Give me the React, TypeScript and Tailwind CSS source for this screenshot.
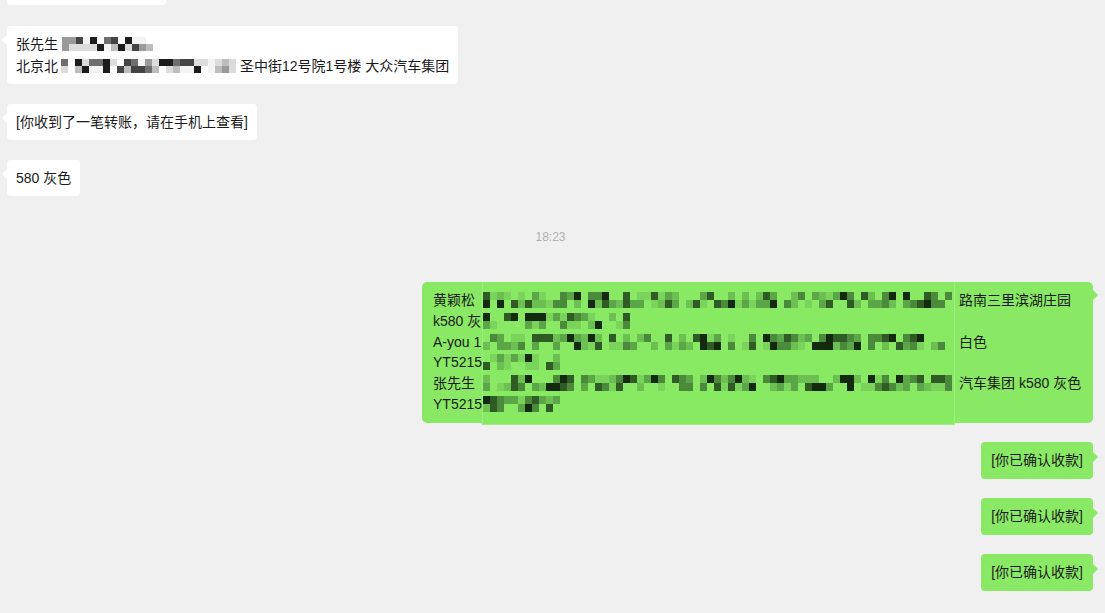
import React from 'react';

const GREEN_SHADES = ['#89e965', '#89e965', '#7ad45c', '#6cc051', '#5ba646', '#4a8a3a', '#2f5c24', '#142a0e'];
const GRAY_SHADES = ['#ffffff', '#f3f3f3', '#dcdcdc', '#bdbdbd', '#9a9a9a', '#6e6e6e', '#444444', '#1c1c1c'];

// deterministic noise so the mosaic looks the same every render
const noise = (n: number) => {
  const x = Math.sin(n * 12.9898 + 78.233) * 43758.5453;
  return x - Math.floor(x);
};

interface MosaicProps {
  cols: number;
  rows?: number;
  seed: number;
  shades: string[];
  cell?: number;
  cellH?: number;
}

const Mosaic: React.FC<MosaicProps> = ({ cols, rows = 2, seed, shades, cell = 7, cellH }) => (
  <span className="inline-flex flex-col align-middle">
    {Array.from({ length: rows }, (_, r) => (
      <span key={r} className="flex">
        {Array.from({ length: cols }, (_, c) => {
          const v = noise(seed * 1000 + r * 131 + c * 7);
          const idx = Math.min(shades.length - 1, Math.floor(Math.pow(v, 1.1) * shades.length));
          return <span key={c} style={{ width: cell, height: cellH ?? cell, backgroundColor: shades[idx] }} />;
        })}
      </span>
    ))}
  </span>
);

const LeftBubble: React.FC<{ children: React.ReactNode }> = ({ children }) => (
  <div className="relative self-start ml-[7px] bg-white rounded-[4px] px-[9px] py-[7px] leading-[22px]">
    <span className="absolute left-[-5px] top-[9px] w-0 h-0 border-y-[5px] border-y-transparent border-r-[5px] border-r-white" />
    {children}
  </div>
);

const RightBubble: React.FC<{ children: React.ReactNode }> = ({ children }) => (
  <div className="relative self-end mr-[12px] bg-[#89e965] rounded-[4px] px-[10px] py-[7px] leading-[23px]">
    <span className="absolute right-[-5px] top-[10px] w-0 h-0 border-y-[5px] border-y-transparent border-l-[5px] border-l-[#89e965]" />
    {children}
  </div>
);

const greenLines = [
  { left: '黄颖松 ', right: '路南三里滨湖庄园', cols: 67 },
  { left: 'k580 灰', right: '', cols: 21 },
  { left: 'A-you 1', right: '白色', cols: 66 },
  { left: 'YT5215', right: '', cols: 11 },
  { left: '张先生 ', right: '汽车集团 k580 灰色', cols: 67 },
  { left: 'YT5215', right: '', cols: 11 },
];

export default function App() {
  return (
    <div
      className="w-[1105px] h-[613px] overflow-hidden bg-[#f0f0f0] flex flex-col text-[14px] text-[#1a1a1a]"
      style={{ fontFamily: '"Liberation Sans", "Noto Sans CJK SC", sans-serif' }}
    >
      {/* tail end of a bubble scrolled off the top */}
      <div className="ml-[7px] w-[159px] h-[5px] bg-white rounded-b-[4px]" />

      <div className="mt-[21px]" />
      <LeftBubble>
        <div className="flex items-center h-[22px]">
          张先生&nbsp;
          <Mosaic cols={13} seed={3} shades={GRAY_SHADES} />
        </div>
        <div className="flex items-center h-[22px] whitespace-nowrap">
          北京北
          <span className="w-[3px]" />
          <Mosaic cols={25} seed={5} shades={GRAY_SHADES} />
          <span className="w-[4px]" />
          圣中街12号院1号楼 大众汽车集团
        </div>
      </LeftBubble>

      <div className="mt-[20px]" />
      <LeftBubble>[你收到了一笔转账，请在手机上查看]</LeftBubble>

      <div className="mt-[20px]" />
      <LeftBubble>580 灰色</LeftBubble>

      <div className="mt-[33px] self-center ml-[-4px] text-[12px] leading-[17px] text-[#b0b0b0]">18:23</div>

      {/* big forwarded order message */}
      <div className="mt-[36px] relative self-end mr-[12px] w-[671px] bg-[#89e965] rounded-[5px] pl-[11px] pr-[8px] py-[8px] leading-[20.8px]">
        <span className="absolute right-[-5px] top-[8px] w-0 h-0 border-y-[5px] border-y-transparent border-l-[5px] border-l-[#89e965]" />
        {greenLines.map((l, i) => (
          <div key={i} className="flex h-[20.8px] whitespace-nowrap">
            <span className="w-[526px] shrink-0">{l.left}</span>
            <span>{l.right}</span>
          </div>
        ))}
        <div className="absolute left-[60px] top-0 w-[473px] h-[143px] bg-[#88ea63] border-b border-x border-[#9cef7d] pt-[10px] flex flex-col gap-[4.8px]">
          {greenLines.map((l, i) => (
            <div key={i} className="h-[16px] flex">
              <Mosaic cols={l.cols} seed={20 + i} shades={GREEN_SHADES} cellH={8} />
            </div>
          ))}
        </div>
      </div>

      <div className="mt-[19px]" />
      <RightBubble>[你已确认收款]</RightBubble>
      <div className="mt-[19px]" />
      <RightBubble>[你已确认收款]</RightBubble>
      <div className="mt-[19px]" />
      <RightBubble>[你已确认收款]</RightBubble>
    </div>
  );
}
